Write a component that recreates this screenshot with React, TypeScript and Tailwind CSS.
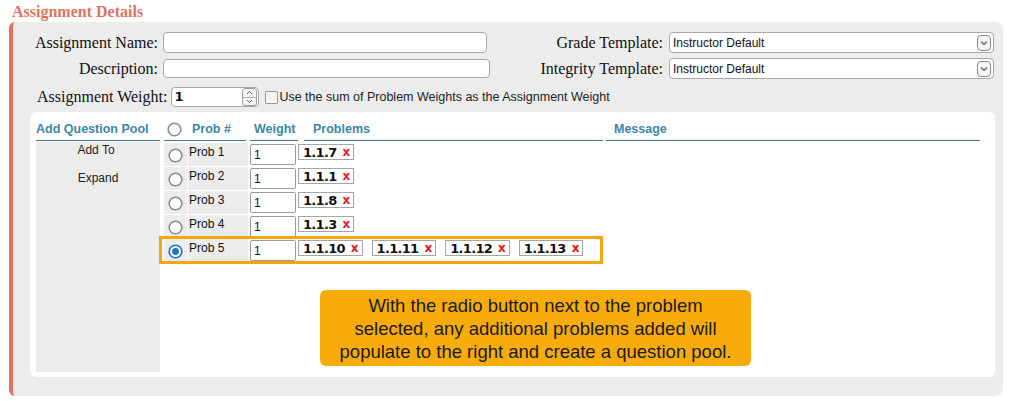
import React from "react";

function Radio({ checked = false }: { checked?: boolean }) {
  return (
    <svg width="15" height="15" viewBox="0 0 15 15" className="block">
      <circle cx="7.5" cy="7.5" r="6.3" fill="#fff" stroke={checked ? "#1c6fd9" : "#8c8c8c"} strokeWidth="1.6" />
      {checked && <circle cx="7.5" cy="7.5" r="3.4" fill="#1c6fd9" />}
    </svg>
  );
}

function SelectArrow() {
  return (
    <div className="w-[14px] h-[16px] rounded-[4px] border border-[#8a8a8a] bg-[#f6f6f6] flex items-center justify-center">
      <svg width="8" height="6" viewBox="0 0 8 6">
        <path d="M1 1.5 L4 4.5 L7 1.5" fill="none" stroke="#555" strokeWidth="1.1" />
      </svg>
    </div>
  );
}

function Spinner() {
  return (
    <div className="w-[15px] h-[18px] rounded-[3px] border border-[#a0a0a0] bg-[#f3f3f3] flex flex-col">
      <div className="flex-1 flex items-center justify-center border-b border-[#b5b5b5]">
        <svg width="7" height="5" viewBox="0 0 7 5">
          <path d="M1 4 L3.5 1.5 L6 4" fill="none" stroke="#666" strokeWidth="1" />
        </svg>
      </div>
      <div className="flex-1 flex items-center justify-center">
        <svg width="7" height="5" viewBox="0 0 7 5">
          <path d="M1 1 L3.5 3.5 L6 1" fill="none" stroke="#666" strokeWidth="1" />
        </svg>
      </div>
    </div>
  );
}

function Chip({ label }: { label: string }) {
  return (
    <div className="h-[16px] border border-[#a6a6a6] bg-white flex items-center gap-[6px] pl-[4px] pr-[3px] font-['DejaVu_Sans',sans-serif] font-bold text-[13px] leading-none text-[#111]">
      <span className="tracking-[-0.7px]">{label}</span>
      <span className="text-[#e8141b] text-[12px]">x</span>
    </div>
  );
}

const rows = [
  { n: 1, chips: ["1.1.7"], sel: false },
  { n: 2, chips: ["1.1.1"], sel: false },
  { n: 3, chips: ["1.1.8"], sel: false },
  { n: 4, chips: ["1.1.3"], sel: false },
  { n: 5, chips: ["1.1.10", "1.1.11", "1.1.12", "1.1.13"], sel: true },
];

export default function App() {
  const sans = "font-['Liberation_Sans',Arial,sans-serif]";
  const serif = "font-['Liberation_Serif','Times_New_Roman',serif]";
  const head = "text-[12.5px] font-bold text-[#3b87a3]";
  return (
    <div className={`w-[1010px] h-[401px] bg-white overflow-hidden ${sans}`}>
      <div className={`h-[22px] pl-[12px] pt-[3px] leading-[18px] text-[16px] font-bold text-[#e0735f] ${serif}`}>
        Assignment Details
      </div>
      <div className="ml-[9px] mr-[7px] h-[374px] border-l-[4px] border-[#e07462] bg-[#ececec] rounded-l-[6px] rounded-r-[8px] pt-[10px] flex flex-col">
        {/* Row 1 */}
        <div className="flex items-center h-[21px]">
          <div className={`w-[145px] text-right text-[16px] text-[#111] ${serif}`}>Assignment Name:</div>
          <div className="ml-[5px] w-[324px] h-[21px] rounded-[4px] border border-[#a8a8a8] bg-white" />
          <div className={`w-[176px] text-right text-[16px] text-[#111] ${serif}`}>Grade Template:</div>
          <div className="ml-[6px] w-[325px] h-[21px] rounded-[4px] border border-[#a8a8a8] bg-white flex items-center justify-between pl-[3px] pr-[2px]">
            <span className="text-[12px] text-[#111]">Instructor Default</span>
            <SelectArrow />
          </div>
        </div>
        {/* Row 2 */}
        <div className="flex items-center h-[21px] mt-[5px]">
          <div className={`w-[145px] text-right text-[16px] text-[#111] ${serif}`}>Description:</div>
          <div className="ml-[5px] w-[327px] h-[19px] rounded-[4px] border border-[#a8a8a8] bg-white" />
          <div className={`w-[173px] text-right text-[16px] text-[#111] ${serif}`}>Integrity Template:</div>
          <div className="ml-[6px] w-[325px] h-[21px] rounded-[4px] border border-[#a8a8a8] bg-white flex items-center justify-between pl-[3px] pr-[2px]">
            <span className="text-[12px] text-[#111]">Instructor Default</span>
            <SelectArrow />
          </div>
        </div>
        {/* Row 3 */}
        <div className="flex items-center h-[20px] mt-[8px] pl-[24px]">
          <div className={`text-[16px] text-[#111] ${serif}`}>Assignment Weight:</div>
          <div className="ml-[4px] w-[88px] h-[20px] rounded-[4px] border border-[#a8a8a8] bg-white flex items-center justify-between pl-[2px] pr-[1px]">
            <span className="text-[13px] font-bold text-[#111] font-['DejaVu_Sans',sans-serif]">1</span>
            <Spinner />
          </div>
          <div className="ml-[6px] w-[13px] h-[13px] border border-[#9a9a9a] bg-[#f4f4f4] rounded-[1px]" />
          <span className="ml-[1px] text-[12.5px] text-[#222]">Use the sum of Problem Weights as the Assignment Weight</span>
        </div>
        {/* White panel */}
        <div className="relative ml-[17px] mr-[8px] mt-[5px] h-[265px] bg-white rounded-[6px] pl-[6px] pt-[6px] flex">
          {/* left column */}
          <div className="w-[124px] flex flex-col">
            <div className={`h-[23px] border-b border-[#3f7b85] flex items-center ${head}`}>Add Question Pool</div>
            <div className="mt-[1px] h-[230px] bg-[#ececec] flex flex-col items-center pt-[1px] text-[12px] leading-[14px] text-[#222]">
              <div className="pr-[4px]">Add To</div>
              <div className="mt-[14px]">Expand</div>
            </div>
          </div>
          {/* table */}
          <div className="ml-[4px] flex flex-col">
            <div className="flex h-[23px]">
              <div className={`w-[82px] border-b border-[#3f7b85] flex items-center pl-[3px] ${head}`}>
                <Radio />
                <span className="ml-[10px]">Prob #</span>
              </div>
              <div className={`ml-[4px] w-[48px] border-b border-[#3f7b85] flex items-center pl-[4px] ${head}`}>Weight</div>
              <div className={`ml-[6px] w-[299px] border-b border-[#3f7b85] flex items-center pl-[9px] ${head}`}>Problems</div>
              <div className={`ml-[3px] w-[374px] border-b border-[#3f7b85] flex items-center pl-[8px] ${head}`}>Message</div>
            </div>
            <div className="mt-[2px] flex flex-col gap-[1px]">
              {rows.map((r) => (
                <div key={r.n} className="flex h-[23px]">
                  <div className="w-[23px] bg-[#ececec] flex items-center pl-[4px] pt-[1px]">
                    <Radio checked={r.sel} />
                  </div>
                  <div className="ml-[1px] w-[60px] bg-[#ececec] text-[12px] leading-[14px] pl-[1px] pt-[2px] text-[#111]">
                    Prob {r.n}
                  </div>
                  <div className="ml-[2px] mt-[1px] w-[46px] h-[21px] border border-[#9a9a9a] rounded-[2px] text-[12px] leading-[14px] pl-[3px] pt-[3px] text-[#111]">
                    1
                  </div>
                  <div className="ml-[2px] pt-[1px] flex gap-[9px] items-start">
                    {r.chips.map((c) => (
                      <Chip key={c} label={c} />
                    ))}
                  </div>
                </div>
              ))}
            </div>
          </div>
          {/* annotation overlays */}
          <div className="absolute left-[129px] top-[124px] w-[444px] h-[28px] border-[3px] border-[#f5a50f] pointer-events-none" />
          <div className="absolute left-[290px] top-[178px] w-[431px] h-[76px] rounded-[6px] bg-[#f8ac0b] flex flex-col items-center justify-center text-[18.5px] leading-[23px] text-[#1a1a1a] text-center">
            <div>With the radio button next to the problem</div>
            <div>selected, any additional problems added will</div>
            <div>populate to the right and create a question pool.</div>
          </div>
        </div>
      </div>
    </div>
  );
}
